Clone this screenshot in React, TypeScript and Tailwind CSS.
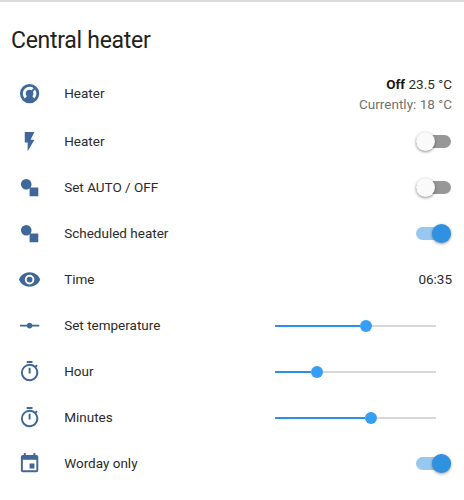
import React from "react";

const icons = {
  thermostat:
    "M16.95,16.95L14.83,14.83C15.55,14.1 16,13.1 16,12C16,11.26 15.79,10.57 15.43,10L17.6,7.81C18.5,9 19,10.43 19,12C19,13.93 18.22,15.68 16.95,16.95M12,5C13.57,5 15,5.5 16.19,6.4L14,8.56C13.43,8.21 12.74,8 12,8A4,4 0 0,0 8,12C8,13.1 8.45,14.1 9.17,14.83L7.05,16.95C5.78,15.68 5,13.93 5,12A7,7 0 0,1 12,5M12,2A10,10 0 0,0 2,12A10,10 0 0,0 12,22A10,10 0 0,0 22,12A10,10 0 0,0 12,2Z",
  flash: "M7,2V13H10V22L17,10H13L17,2H7Z",
  shapes:
    "M8.5,3A5.5,5.5 0 0,1 14,8.5C14,9.83 13.53,11.05 12.74,12H21V21H12V12.74C11.05,13.53 9.83,14 8.5,14A5.5,5.5 0 0,1 3,8.5A5.5,5.5 0 0,1 8.5,3Z",
  eye: "M12,9A3,3 0 0,0 9,12A3,3 0 0,0 12,15A3,3 0 0,0 15,12A3,3 0 0,0 12,9M12,17A5,5 0 0,1 7,12A5,5 0 0,1 12,7A5,5 0 0,1 17,12A5,5 0 0,1 12,17M12,4.5C7,4.5 2.73,7.61 1,12C2.73,16.39 7,19.5 12,19.5C17,19.5 21.27,16.39 23,12C21.27,7.61 17,4.5 12,4.5Z",
  ray: "M2,11H9.17C9.58,9.83 10.69,9 12,9C13.31,9 14.42,9.83 14.83,11H22V13H14.83C14.42,14.17 13.31,15 12,15C10.69,15 9.58,14.17 9.17,13H2V11Z",
  timer:
    "M12,20A7,7 0 0,1 5,13A7,7 0 0,1 12,6A7,7 0 0,1 19,13A7,7 0 0,1 12,20M19.03,7.39L20.45,5.97C20,5.46 19.55,5 19.04,4.56L17.62,6C16.07,4.74 14.12,4 12,4A9,9 0 0,0 3,13A9,9 0 0,0 12,22C17,22 21,17.97 21,13C21,10.88 20.26,8.93 19.03,7.39M11,14H13V8H11M15,1H9V3H15V1Z",
  calendar:
    "M19,19H5V8H19M16,1V3H8V1H6V3H5C3.89,3 3,3.89 3,5V19A2,2 0 0,0 5,21H19A2,2 0 0,0 21,19V5C21,3.89 20.1,3 19,3H18V1M17,12H12V17H17V12Z",
};

function Row({ icon, label, children }: { icon: keyof typeof icons; label: string; children: React.ReactNode }) {
  return (
    <div className="flex h-[46px] items-center pr-3 pl-[18px]">
      <svg viewBox="0 0 24 24" className="mt-[1px] size-[23.2px] shrink-0 fill-[#3f6799]">
        <path d={icons[icon]} />
      </svg>
      <span className="ml-[23px] flex-1">{label}</span>
      {children}
    </div>
  );
}

function Toggle({ on = false }: { on?: boolean }) {
  return (
    <div
      className={
        on
          ? "mr-px flex h-[13px] w-[35px] items-center justify-end rounded-full bg-[#98c7f0]"
          : "mr-px flex h-[13px] w-[35px] items-center rounded-full bg-[#979797]"
      }
    >
      <div
        className={
          on
            ? "size-[19px] shrink-0 rounded-full bg-[#3191e1] shadow-[0_1px_3px_rgba(0,0,0,0.4)]"
            : "size-[19px] shrink-0 rounded-full bg-[#fafafa] shadow-[0_1px_3px_rgba(0,0,0,0.45)]"
        }
      />
    </div>
  );
}

function Slider({ value }: { value: number }) {
  return (
    <div className="mt-[1px] mr-4 flex h-3 w-[161px] items-center">
      <div className="h-[2px] bg-[#2a90ec]" style={{ width: value - 6 }} />
      <div className="size-3 shrink-0 rounded-full bg-[#379ff3]" />
      <div className="h-[2px] flex-1 bg-[#d8d8d8]" />
    </div>
  );
}

export default function App() {
  return (
    <main className="h-[500px] w-[464px] overflow-hidden border-t-2 border-[#dcdcdc] bg-white font-['Roboto',sans-serif] text-[13.5px] text-[#2b2b2b]">
      <h1 className="pt-[23px] pl-[11px] text-[23px] leading-8 tracking-[-0.28px] text-[#212121]">Central heater</h1>
      <div className="pt-[13px]">
        <Row icon="thermostat" label="Heater">
          <div className="pt-[2px] text-right leading-5">
            <div>
              <b className="font-bold text-[#171717]">Off</b> 23.5 °C
            </div>
            <div className="text-[#727272]">Currently: 18 °C</div>
          </div>
        </Row>
      </div>
      <div className="pt-[2px]">
        <Row icon="flash" label="Heater"><Toggle /></Row>
        <Row icon="shapes" label="Set AUTO / OFF"><Toggle /></Row>
        <Row icon="shapes" label="Scheduled heater"><Toggle on /></Row>
        <Row icon="eye" label="Time"><span>06:35</span></Row>
        <Row icon="ray" label="Set temperature"><Slider value={91} /></Row>
        <Row icon="timer" label="Hour"><Slider value={42} /></Row>
        <Row icon="timer" label="Minutes"><Slider value={96} /></Row>
        <Row icon="calendar" label="Worday only"><Toggle on /></Row>
      </div>
    </main>
  );
}
